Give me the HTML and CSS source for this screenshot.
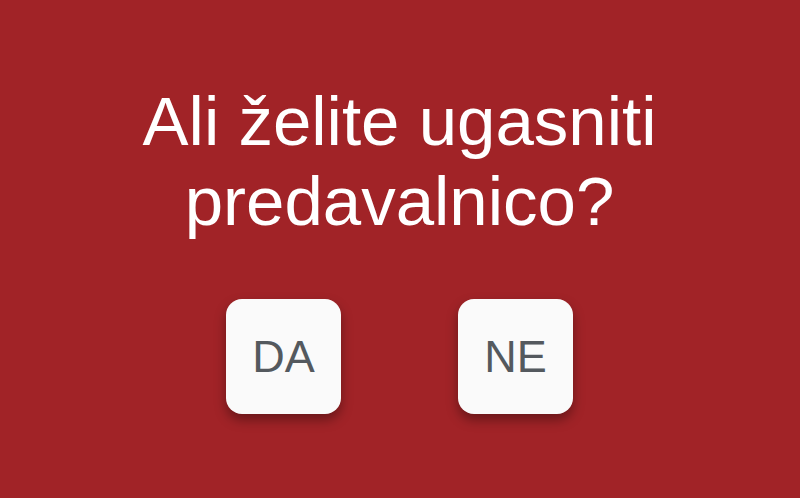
FILE: index.html
```html
<!DOCTYPE html>
<html lang="sl">
<head>
<meta charset="utf-8">
<link rel="stylesheet" href="styles.css">
</head>
<body>
<main class="dialog">
  <h1 class="question">Ali želite ugasniti<br>predavalnico?</h1>
  <div class="actions">
    <button class="choice">DA</button>
    <button class="choice">NE</button>
  </div>
</main>
</body>
</html>
```
FILE: styles.css
```css
html, body {
  margin: 0;
  padding: 0;
  height: 100%;
}
body {
  background: #a12327;
  font-family: "Liberation Sans", Arial, sans-serif;
}
.dialog {
  display: flex;
  flex-direction: column;
  align-items: center;
  padding-top: 82px;
  padding-right: 1px;
}
.question {
  margin: 0;
  color: #ffffff;
  font-weight: normal;
  font-size: 69px;
  line-height: 80px;
  text-align: center;
}
.actions {
  display: flex;
  gap: 117px;
  margin-top: 57px;
}
.choice {
  width: 115px;
  height: 115px;
  border: none;
  border-radius: 16px;
  background: #fafafa;
  color: #54595e;
  font-family: "Liberation Sans", Arial, sans-serif;
  font-size: 45px;
  padding: 0;
  display: flex;
  align-items: center;
  justify-content: center;
  box-shadow: 0 6px 12px rgba(0, 0, 0, 0.35);
}
```
